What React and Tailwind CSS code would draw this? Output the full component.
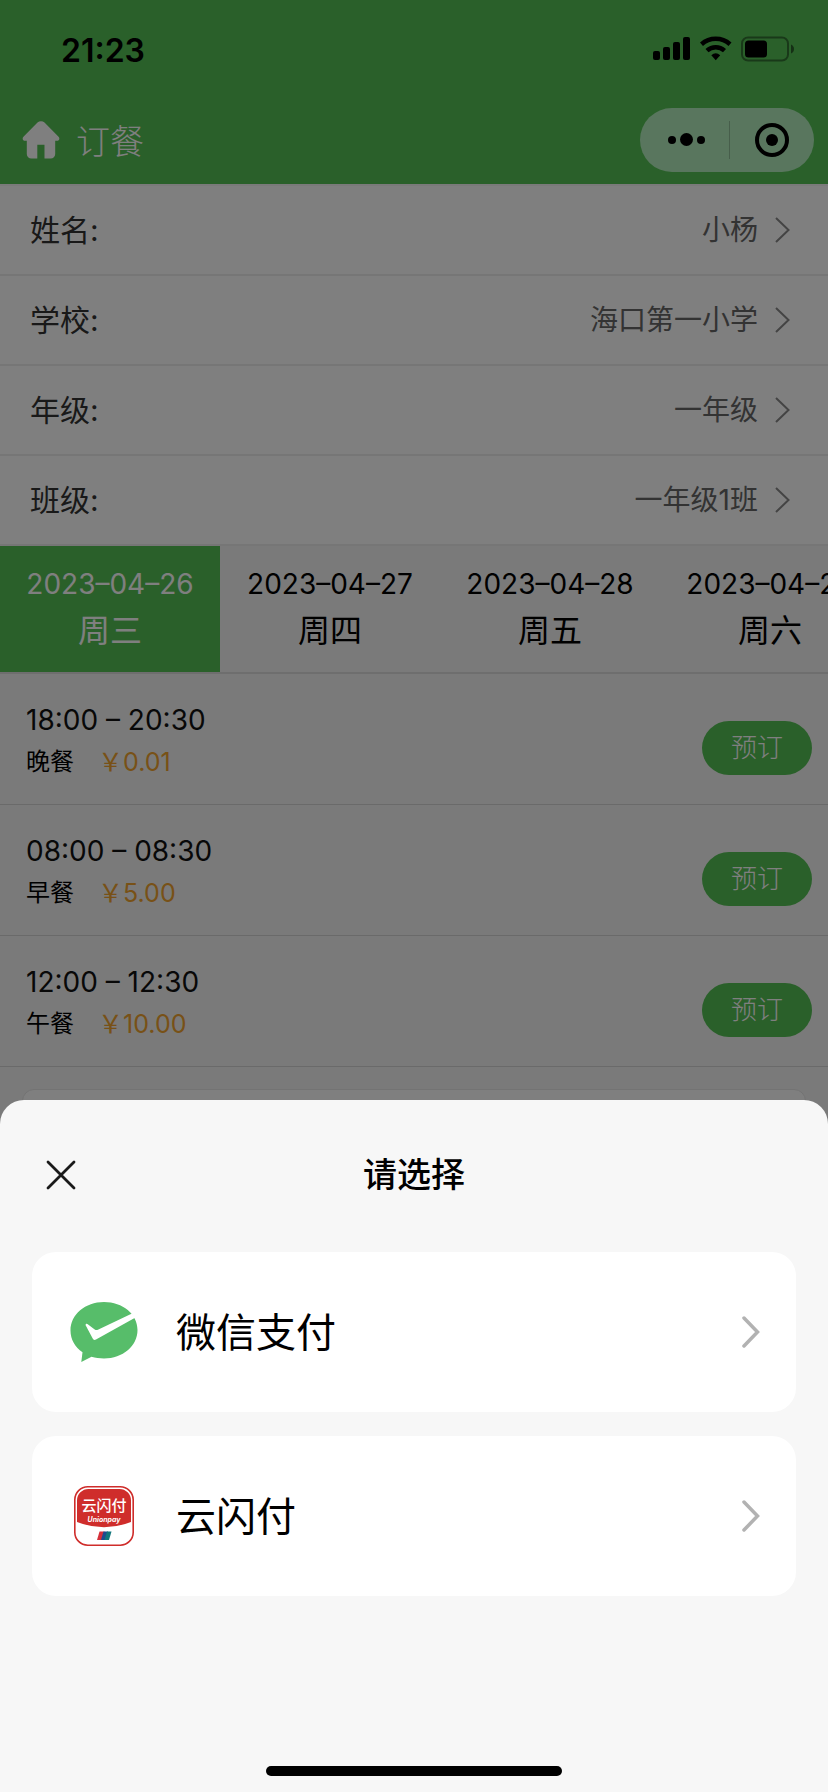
import React, { useState } from 'react';

const profile = [
  { label: '姓名', value: '小杨' },
  { label: '学校', value: '海口第一小学' },
  { label: '年级', value: '一年级' },
  { label: '班级', value: '一年级1班' },
];

const days = [
  { date: '2023–04–26', week: '周三' },
  { date: '2023–04–27', week: '周四' },
  { date: '2023–04–28', week: '周五' },
  { date: '2023–04–29', week: '周六' },
];

const meals = [
  { time: '18:00 – 20:30', name: '晚餐', price: '0.01' },
  { time: '08:00 – 08:30', name: '早餐', price: '5.00' },
  { time: '12:00 – 12:30', name: '午餐', price: '10.00' },
];

function StatusBar() {
  return (
    <div className="flex h-[98px] items-center justify-between pl-[61px] pr-[34px] text-black">
      <span className="pt-1 text-[32px] font-semibold leading-none">21:23</span>
      <svg width="142" height="26" viewBox="0 0 142 26" aria-hidden="true">
        <rect x="1" y="15" width="7" height="9" rx="2" />
        <rect x="11" y="11" width="7" height="13" rx="2" />
        <rect x="21" y="6" width="7" height="18" rx="2" />
        <rect x="31" y="1" width="7" height="23" rx="2" />
        <g fill="none" stroke="#000" strokeWidth="4.5">
          <path d="M49.500 8.200a21.500 21.500 0 0 1 28.500 0" />
          <path d="M55 14.700a13 13 0 0 1 17.500 0" />
        </g>
        <path d="M59.300 19.200a7 7 0 0 1 8.900 0l-4.450 5z" />
        <rect x="90" y="1.500" width="46" height="23" rx="6" fill="none" stroke="#000" strokeOpacity="0.4" strokeWidth="2" />
        <rect x="93" y="4.500" width="22" height="17" rx="3.500" />
        <path d="M139 8.500q3 1.500 3 4.500t-3 4.500z" fillOpacity="0.5" />
      </svg>
    </div>
  );
}

function NavBar() {
  return (
    <div className="flex h-[86px] items-center justify-between pb-[3px] pl-[22px] pr-[14px]">
      <div className="flex items-center gap-4">
        <button type="button" aria-label="首页">
          <svg width="38" height="38" viewBox="0 0 38 38" fill="#fff">
            <path d="M15.500 1.600a5 5 0 0 1 7 0L36.300 15.500c2 2 1 4.300-1.500 4.300h-1.600V33a4.500 4.500 0 0 1-4.500 4.500h-6.200V23.800h-7.200v13.700H9.300A4.500 4.500 0 0 1 4.800 33V19.800H3.200c-2.500 0-3.500-2.300-1.500-4.300z" />
          </svg>
        </button>
        <h1 className="pt-1 text-[34px] font-light leading-none text-white">订餐</h1>
      </div>
      <div className="flex h-16 w-[174px] items-center rounded-full bg-[#b2ecbc]">
        <button type="button" aria-label="更多" className="flex flex-1 items-center justify-center gap-1 pl-1">
          <span className="size-2 rounded-full bg-black" />
          <span className="size-[13px] rounded-full bg-black" />
          <span className="size-2 rounded-full bg-black" />
        </button>
        <span className="h-[38px] w-px bg-black/20" />
        <button type="button" aria-label="关闭小程序" className="flex flex-1 items-center justify-center">
          <svg width="34" height="34" viewBox="0 0 34 34">
            <circle cx="17" cy="17" r="15" fill="none" stroke="#000" strokeWidth="4" />
            <circle cx="17" cy="17" r="6" />
          </svg>
        </button>
      </div>
    </div>
  );
}

function ProfileRow({ label, value }) {
  return (
    <button type="button" className="flex h-[90px] w-full items-center border-b-2 border-[#ececec] bg-white pl-[30px] pr-[38px] text-left">
      <span className="flex-1 text-[30px] leading-none text-[#333]">{label}:</span>
      <span className="text-[28px] leading-none text-[#666]">{value}</span>
      <svg className="ml-[17px]" width="15" height="26" viewBox="0 0 15 26" fill="none" stroke="#888" strokeWidth="2">
        <path d="M1 1l12.500 12L1 25" />
      </svg>
    </button>
  );
}

function MealRow({ time, name, price }) {
  return (
    <li className="flex items-center justify-between border-b border-[#d4d4d4] pb-5 pl-[26px] pr-4 pt-[26px]">
      <div>
        <p className="text-[28px] leading-[40px] text-[#111]">{time}</p>
        <p className="flex items-center leading-[44px]">
          <span className="text-[24px] text-black">{name}</span>
          <span className="ml-6 text-[25px] text-[#f0a32f]">￥{price}</span>
        </p>
      </div>
      <button type="button" className="mt-3 h-[54px] w-[110px] rounded-full bg-[#54c054] text-[26px] font-light leading-none text-white">
        预订
      </button>
    </li>
  );
}

function WeChatPayIcon() {
  return (
    <svg width="68" height="62" viewBox="0 0 68 62" aria-hidden="true">
      <path
        d="M34 1C15.200 1 .500 13.500.500 29.500c0 9 4.500 16.500 12 21.700L11.300 61l10.200-5.200c4 1.200 8 1.700 12.500 1.700 18.800 0 33.500-12.500 33.500-28.500S52.800 1 34 1z"
        fill="#57bd6a"
      />
      <path d="M15.500 24c.3-1.500 1.600-1.500 2.600-.6l6.600 5c1 .7 2 .8 3.200.3L62 12.500l3.500 4L26 38.600c-1.500.8-2.700.4-3.300-1z" fill="#fff" />
    </svg>
  );
}

function UnionPayIcon() {
  return (
    <svg width="60" height="60" viewBox="0 0 60 60" aria-hidden="true">
      <rect x="0.800" y="0.800" width="58.400" height="58.400" rx="13" fill="#fff" stroke="#cf2d2b" strokeWidth="1.600" />
      <path d="M3 14.500A11.500 11.500 0 0 1 14.500 3h31A11.500 11.500 0 0 1 57 14.500V36Q30 46.500 3 36z" fill="#cf2d2b" />
      <text x="30" y="25" textAnchor="middle" fontSize="15" fontWeight="500" fill="#fff">云闪付</text>
      <text x="30" y="35.500" textAnchor="middle" fontSize="7" fontWeight="700" fontStyle="italic" fill="#fff">Unionpay</text>
      <path d="M25.500 45.500h5l-2.500 8.500h-5z" fill="#d5303a" />
      <path d="M29.500 45.500h4.500l-2.500 8.500H27z" fill="#1f4b8f" />
      <path d="M33 45.500h4.500L35 54h-4.500z" fill="#12777c" />
    </svg>
  );
}

const methods = [
  { id: 'wechat', label: '微信支付', Icon: WeChatPayIcon },
  { id: 'unionpay', label: '云闪付', Icon: UnionPayIcon },
];

function PaySheet({ onClose }) {
  return (
    <div className="fixed inset-0 flex flex-col justify-end bg-black/50">
      <section role="dialog" aria-modal="true" aria-labelledby="pay-title" className="rounded-t-3xl bg-[#f7f7f7]">
        <header className="grid grid-cols-[1fr_auto_1fr] items-center px-[46px] pb-[45px] pt-[43px]">
          <button type="button" onClick={onClose} aria-label="关闭" className="flex h-16 items-center">
            <svg width="30" height="30" viewBox="0 0 30 30" stroke="#1a1a1a" strokeWidth="2.800" strokeLinecap="round">
              <path d="M2 2l26 26M28 2L2 28" />
            </svg>
          </button>
          <h2 id="pay-title" className="text-[34px] font-medium leading-none text-black">请选择</h2>
        </header>

        <div className="flex flex-col gap-6 px-8">
          {methods.map(({ id, label, Icon }) => (
            <button key={id} type="button" className="flex h-40 items-center rounded-3xl bg-white pl-[38px] pr-9">
              <span className="flex w-[68px] justify-center">
                <Icon />
              </span>
              <span className="ml-[38px] flex-1 pt-0.5 text-left text-[40px] leading-none text-black">{label}</span>
              <svg width="18" height="32" viewBox="0 0 18 32" fill="none" stroke="#b2b2b2" strokeWidth="3.500" strokeLinecap="round">
                <path d="M2 2l13.500 14L2 30" />
              </svg>
            </button>
          ))}
        </div>

        {/* Home indicator */}
        <div className="flex justify-center pb-4 pt-[170px]">
          <span className="h-[10px] w-[296px] rounded-full bg-black" />
        </div>
      </section>
    </div>
  );
}

export default function App() {
  const [selected, setSelected] = useState(0);
  const [paying, setPaying] = useState(true);

  return (
    <div className="min-h-screen overflow-hidden bg-[#f4f4f4] font-[Inter,'Noto_Sans_CJK_SC',sans-serif]">
      <header className="bg-[#54c054]">
        <StatusBar />
        <NavBar />
      </header>

      <main>
        <div className="border-t-2 border-[#f4f4f4]">
          {profile.map((row) => (
            <ProfileRow key={row.label} {...row} />
          ))}
        </div>

        <div className="flex overflow-hidden border-b-2 border-[#dcdcdc]">
          {days.map((day, i) => (
            <button
              key={day.date}
              type="button"
              onClick={() => setSelected(i)}
              className={`w-[220px] shrink-0 py-4 ${i === selected ? 'bg-[#54c054] text-white' : 'text-black'}`}
            >
              <span className="block text-[28px] leading-[44px]">{day.date}</span>
              <span className="block text-[32px] leading-[50px]">{day.week}</span>
            </button>
          ))}
        </div>

        <ul>
          {meals.map((meal) => (
            <MealRow key={meal.time} {...meal} />
          ))}
        </ul>

        <div className="mx-[22px] mt-[22px] h-40 rounded-xl border border-[#e6e6e6] bg-white" />
      </main>

      {paying && <PaySheet onClose={() => setPaying(false)} />}
    </div>
  );
}
